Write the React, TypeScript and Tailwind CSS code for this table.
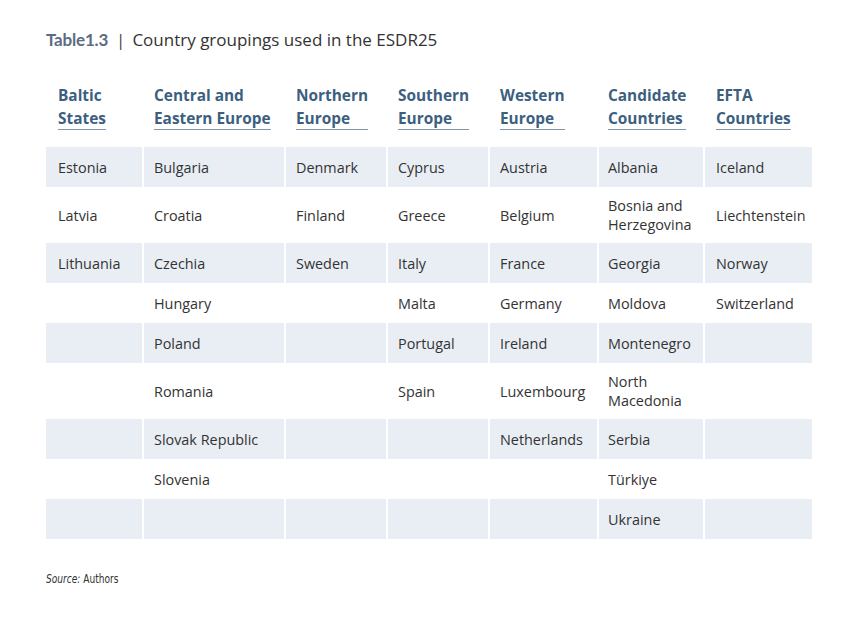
import React from "react";

const headers: string[][] = [
  ["Baltic", "States"],
  ["Central and", "Eastern Europe"],
  ["Northern", "Europe"],
  ["Southern", "Europe"],
  ["Western", "Europe"],
  ["Candidate", "Countries"],
  ["EFTA", "Countries"],
];

const rows: { h: "s" | "d"; cells: string[][] }[] = [
  { h: "s", cells: [["Estonia"], ["Bulgaria"], ["Denmark"], ["Cyprus"], ["Austria"], ["Albania"], ["Iceland"]] },
  { h: "d", cells: [["Latvia"], ["Croatia"], ["Finland"], ["Greece"], ["Belgium"], ["Bosnia and", "Herzegovina"], ["Liechtenstein"]] },
  { h: "s", cells: [["Lithuania"], ["Czechia"], ["Sweden"], ["Italy"], ["France"], ["Georgia"], ["Norway"]] },
  { h: "s", cells: [[], ["Hungary"], [], ["Malta"], ["Germany"], ["Moldova"], ["Switzerland"]] },
  { h: "s", cells: [[], ["Poland"], [], ["Portugal"], ["Ireland"], ["Montenegro"], []] },
  { h: "d", cells: [[], ["Romania"], [], ["Spain"], ["Luxembourg"], ["North", "Macedonia"], []] },
  { h: "s", cells: [[], ["Slovak Republic"], [], [], ["Netherlands"], ["Serbia"], []] },
  { h: "s", cells: [[], ["Slovenia"], [], [], [], ["Türkiye"], []] },
  { h: "s", cells: [[], [], [], [], [], ["Ukraine"], []] },
];

const padFor = (i: number) =>
  i === 0 ? "pl-[12px]" : i === 5 ? "pl-[9px]" : i === 6 ? "pl-[11px]" : "pl-[10px]";

export default function App() {
  return (
    <div
      className="w-[868px] h-[627px] bg-white text-[#333333] pl-[46px] pt-[27px]"
      style={{ fontFamily: '"Open Sans", "Noto Sans", sans-serif' }}
    >
      <div className="flex items-baseline h-[24px]">
        <span
          className="text-[17px] font-bold text-[#5c6c83] tracking-[-0.2px]"
          style={{ fontFamily: 'Lato, "Open Sans", sans-serif' }}
        >
          Table1.3
        </span>
        <span className="text-[17px] text-[#444] ml-[8px] mr-[7px]">|</span>
        <span className="text-[17px] text-[#333]">Country groupings used in the ESDR25</span>
      </div>

      <div className="mt-[33px] grid grid-cols-[96px_140px_100px_100px_107px_104px_107px] gap-x-[2px] w-[766px]">
        {headers.map((h, i) => (
          <div key={i} className={`${padFor(i)} pr-[4px] flex items-end`}>
            <div className="inline-block border-b border-[#8395ab] text-[15.4px] font-bold text-[#3d5f7f]">
              <div className="whitespace-nowrap leading-[24px]">{h[0]}</div>
              <div className="whitespace-nowrap leading-[21px]">{h[1]}</div>
            </div>
          </div>
        ))}
      </div>

      <div className="mt-[17px] grid grid-cols-[96px_140px_100px_100px_107px_104px_107px] gap-x-[2px] w-[766px]">
        {rows.map((r, ri) =>
          r.cells.map((c, ci) => (
            <div
              key={`${ri}-${ci}`}
              className={`${ri % 2 === 0 ? "bg-[#e9eef4]" : "bg-white"} ${r.h === "d" ? "h-[56px]" : "h-[40px]"} ${padFor(ci)} pr-[4px] flex flex-col justify-center text-[14.4px] leading-[19px] text-[#333]`}
            >
              {c.map((l, j) => (
                <div key={j} className="whitespace-nowrap">{l}</div>
              ))}
            </div>
          ))
        )}
      </div>

      <div
        className="mt-[31px] text-[12px] text-[#333] inline-block origin-left scale-x-[0.84] whitespace-nowrap"
        style={{ fontFamily: '"DejaVu Sans Condensed", sans-serif' }}
      >
        <span className="italic">Source:</span> Authors
      </div>
    </div>
  );
}
